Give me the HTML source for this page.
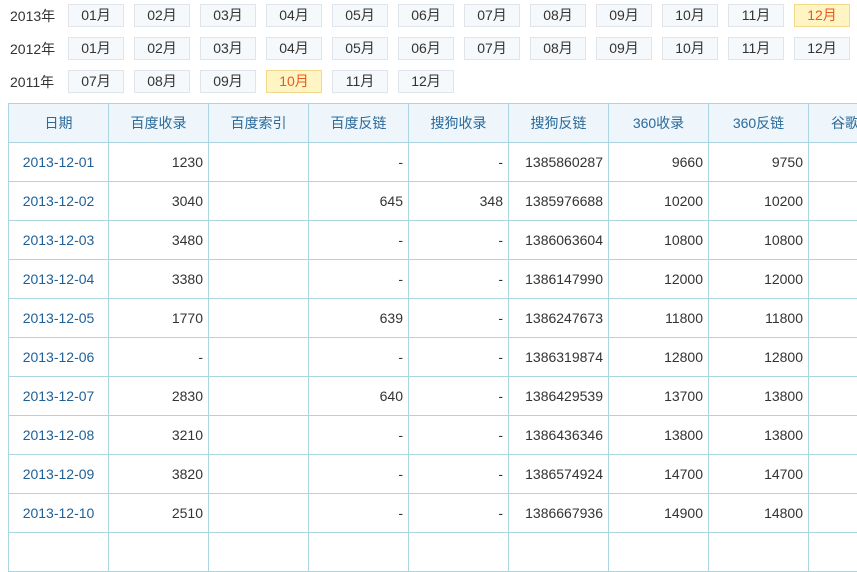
<!DOCTYPE html>
<html><head><meta charset="utf-8"><style>
body{margin:0;width:857px;height:537px;overflow:hidden;background:#fff;font-family:"Liberation Sans","Noto Sans CJK SC",sans-serif;font-size:14px;color:#333;position:relative}
.y{position:absolute;left:10px;font-size:14px;color:#333}
.b{position:absolute;width:54px;height:21px;line-height:21px;text-align:center;background:#f5f9fc;border:1px solid #dfe5ea;color:#333}
.s{background:#fff5c4;border-color:#f2d98a;color:#e8591c}
table{position:absolute;left:8px;top:103px;border-collapse:collapse;table-layout:fixed;width:900px}
td,th{border:1px solid #a9d6e0;height:38px;padding:0 5px;text-align:right;font-weight:normal;white-space:nowrap;overflow:hidden}
th{background:#eef6fb;color:#2b6a9a;text-align:center}
td.d{text-align:center;color:#1f5f97}
</style></head><body>
<div class="y" style="top:6px">2013年</div>
<div class="y" style="top:39px">2012年</div>
<div class="y" style="top:72px">2011年</div>
<div id="btns"></div>
<script>
var h='';
function row(top,ms,sel){ms.forEach(function(m,i){h+='<div class="b'+(m==sel?' s':'')+'" style="left:'+(68+66*i)+'px;top:'+top+'px">'+m+'月</div>';});}
var a=['01','02','03','04','05','06','07','08','09','10','11','12'];
row(4,a,'12');row(37,a,'');row(70,['07','08','09','10','11','12'],'10');
document.getElementById('btns').innerHTML=h;
</script>
<table>
<colgroup><col style="width:100px"><col style="width:100px"><col style="width:100px"><col style="width:100px"><col style="width:100px"><col style="width:100px"><col style="width:100px"><col style="width:100px"><col style="width:100px"></colgroup>
<tr><th>日期</th><th>百度收录</th><th>百度索引</th><th>百度反链</th><th>搜狗收录</th><th>搜狗反链</th><th>360收录</th><th>360反链</th><th style="text-align:left;padding-left:22px">谷歌收录</th></tr>
<tr><td class="d">2013-12-01</td><td>1230</td><td></td><td>-</td><td>-</td><td>1385860287</td><td>9660</td><td>9750</td><td></td></tr>
<tr><td class="d">2013-12-02</td><td>3040</td><td></td><td>645</td><td>348</td><td>1385976688</td><td>10200</td><td>10200</td><td></td></tr>
<tr><td class="d">2013-12-03</td><td>3480</td><td></td><td>-</td><td>-</td><td>1386063604</td><td>10800</td><td>10800</td><td></td></tr>
<tr><td class="d">2013-12-04</td><td>3380</td><td></td><td>-</td><td>-</td><td>1386147990</td><td>12000</td><td>12000</td><td></td></tr>
<tr><td class="d">2013-12-05</td><td>1770</td><td></td><td>639</td><td>-</td><td>1386247673</td><td>11800</td><td>11800</td><td></td></tr>
<tr><td class="d">2013-12-06</td><td>-</td><td></td><td>-</td><td>-</td><td>1386319874</td><td>12800</td><td>12800</td><td></td></tr>
<tr><td class="d">2013-12-07</td><td>2830</td><td></td><td>640</td><td>-</td><td>1386429539</td><td>13700</td><td>13800</td><td></td></tr>
<tr><td class="d">2013-12-08</td><td>3210</td><td></td><td>-</td><td>-</td><td>1386436346</td><td>13800</td><td>13800</td><td></td></tr>
<tr><td class="d">2013-12-09</td><td>3820</td><td></td><td>-</td><td>-</td><td>1386574924</td><td>14700</td><td>14700</td><td></td></tr>
<tr><td class="d">2013-12-10</td><td>2510</td><td></td><td>-</td><td>-</td><td>1386667936</td><td>14900</td><td>14800</td><td></td></tr>
<tr><td class="d"></td><td></td><td></td><td></td><td></td><td></td><td></td><td></td><td></td></tr>
</table>
</body></html>
